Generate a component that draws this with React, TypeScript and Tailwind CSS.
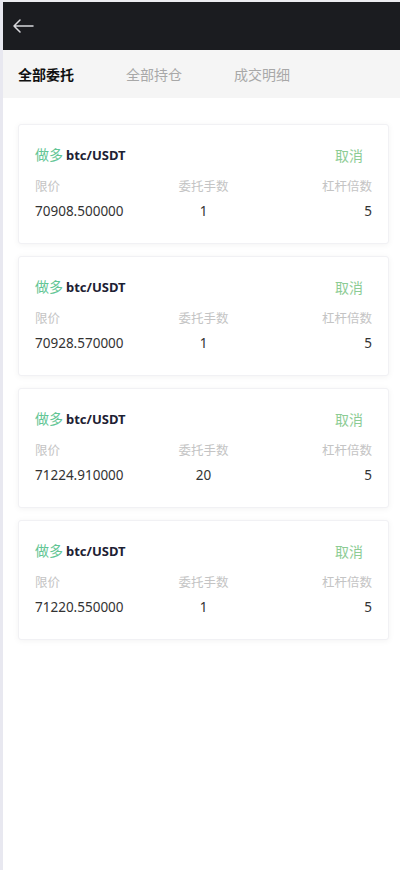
import React from "react";

const ORDERS = [
    { price: "70908.500000", lots: "1", leverage: "5" },
    { price: "70928.570000", lots: "1", leverage: "5" },
    { price: "71224.910000", lots: "20", leverage: "5" },
    { price: "71220.550000", lots: "1", leverage: "5" },
];

const TABS = ["全部委托", "全部持仓", "成交明细"];

function OrderCard({ price, lots, leverage }: (typeof ORDERS)[number]) {
    return (
        <div className="rounded-[3px] border border-[#f1f1f4] bg-white px-4 pt-[20px] pb-[22px] shadow-[0_1px_6px_rgba(0,0,0,0.05)]">
            {/* title row */}
            <div className="flex h-[20px] items-center justify-between pr-[9px]">
                <div className="flex items-baseline text-[14px] leading-[20px]">
                    <span className="text-[#62c594]">做多</span>
                    <span className="ml-[3px] text-[13px] font-bold text-[#1d2133]">btc/USDT</span>
                </div>
                <span className="text-[14px] text-[#8ccc94]">取消</span>
            </div>
            {/* labels + values */}
            <div className="mt-3 grid grid-cols-3 text-[12.5px] leading-[20px] text-[#c4c4c4]">
                <span>限价</span>
                <span className="text-center">委托手数</span>
                <span className="text-right">杠杆倍数</span>
            </div>
            <div className="mt-1 grid grid-cols-3 text-[13.5px] leading-[20px] text-[#333]">
                <span>{price}</span>
                <span className="text-center">{lots}</span>
                <span className="text-right">{leverage}</span>
            </div>
        </div>
    );
}

export default function App() {
    return (
        <div
            className="flex h-[870px] w-[400px] flex-col border-l-[3px] border-[#e8e8f0] bg-white"
            style={{ fontFamily: '"Noto Sans", "Noto Sans CJK SC", sans-serif' }}
        >
            {/* Header */}
            <div className="h-[2px] bg-[#ececf0]" />
            <div className="flex h-[48px] items-center bg-[#1b1c20] pl-[9px]">
                <svg width="22" height="14" viewBox="0 0 22 14" fill="none">
                    <path d="M21 7H2M8 1L2 7l6 6" stroke="#d8d8dc" strokeWidth="1.5" strokeLinecap="round" strokeLinejoin="round" />
                </svg>
            </div>

            {/* Tabs */}
            <div className="flex h-[48px] items-center gap-[52px] bg-[#f5f5f5] pl-[15px] text-[14px]">
                {TABS.map((t, i) => (
                    <span key={t} className={i === 0 ? "font-bold text-[#111]" : "text-[#a8a8a8]"}>
                        {t}
                    </span>
                ))}
            </div>

            {/* Orders */}
            <div className="flex flex-col gap-[12px] pt-[26px] pl-[15px] pr-[11px]">
                {ORDERS.map((o, i) => (
                    <OrderCard key={i} {...o} />
                ))}
            </div>
        </div>
    );
}
